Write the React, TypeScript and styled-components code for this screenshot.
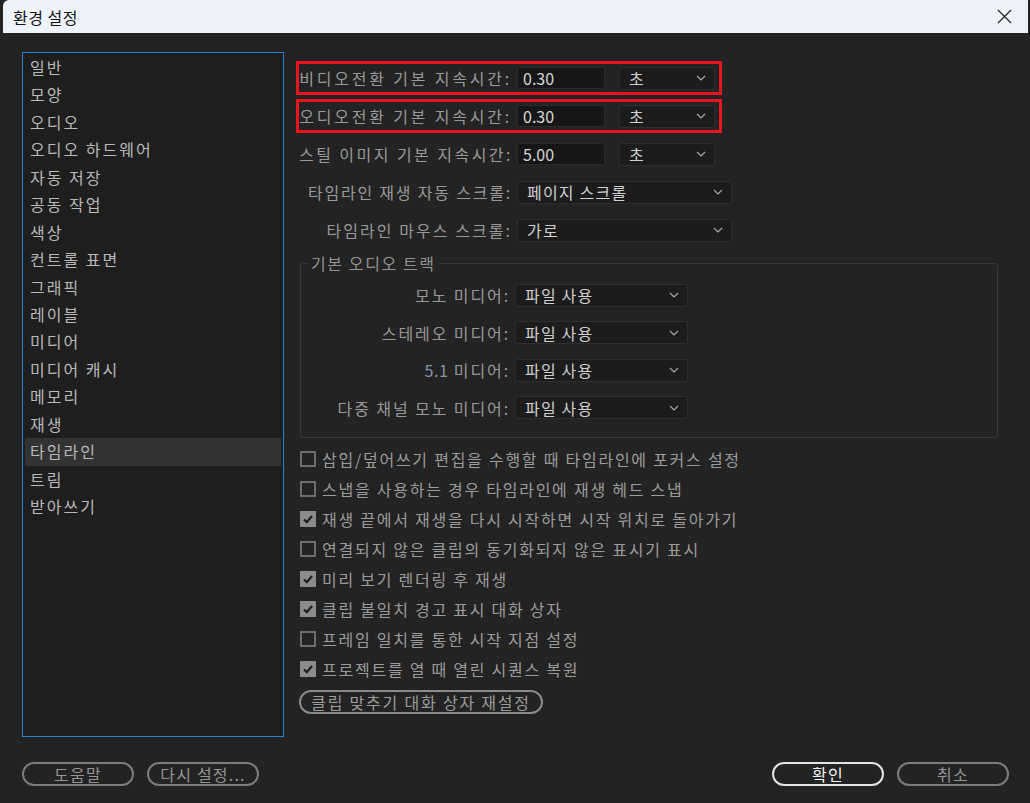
import React, { useState } from "react";
import styled, { createGlobalStyle } from "styled-components";

const GlobalStyle = createGlobalStyle`
  html, body {
    margin: 0;
    padding: 0;
    background: #232323;
  }
  body {
    font-family: "Noto Sans CJK KR", "Noto Sans", sans-serif;
  }
  * {
    box-sizing: border-box;
  }
`;

const Window = styled.div`
  width: 1030px;
  height: 803px;
  display: flex;
  flex-direction: column;
  background: #232323;
  overflow: hidden;
`;

const TitleBar = styled.div`
  height: 33px;
  margin: 0 2px 0 3px;
  border-top-left-radius: 6px;
  background: #eef2f9;
  display: flex;
  align-items: center;
  justify-content: space-between;
  padding-left: 10px;
  padding-right: 14px;
  color: #111;
  font-size: 16px;
  letter-spacing: 0.5px;
`;

const CloseButton = styled.button`
  width: 20px;
  height: 20px;
  padding: 0;
  border: none;
  background: transparent;
  display: flex;
  align-items: center;
  justify-content: center;
  cursor: pointer;
`;

const Content = styled.div`
  flex: 1;
  display: flex;
  flex-direction: column;
  padding: 19px 21px 0 22px;
`;

const Main = styled.div`
  display: flex;
  height: 685px;
`;

const Sidebar = styled.ul`
  width: 262px;
  height: 100%;
  margin: 0;
  padding: 1px 2px;
  list-style: none;
  background: #1e1e1e;
  border: 1px solid #2f7fd6;
`;

const SideItem = styled.li<{ $active?: boolean }>`
  height: 27.45px;
  line-height: 27.45px;
  padding-left: 5px;
  font-size: 16px;
  letter-spacing: 2px;
  color: #b9b9b9;
  background: ${(p) => (p.$active ? "#333333" : "transparent")};
  cursor: default;
`;

const Panel = styled.div`
  flex: 1;
  margin-left: 12px;
  padding-top: 9px;
  display: flex;
  flex-direction: column;
`;

const TopRows = styled.div`
  display: flex;
  flex-direction: column;
  gap: 4px;
`;

const Row = styled.div<{ $highlight?: boolean }>`
  display: flex;
  align-items: center;
  height: 34px;
  width: ${(p) => (p.$highlight ? "426px" : "auto")};
  border: 3px solid ${(p) => (p.$highlight ? "#e8141e" : "transparent")};
`;

const Label = styled.span<{ $width: number; $tracking?: number }>`
  width: ${(p) => p.$width}px;
  flex-shrink: 0;
  text-align: right;
  white-space: nowrap;
  font-size: 16px;
  letter-spacing: ${(p) => p.$tracking ?? 1.9}px;
  color: #999999;
  margin-right: 5px;
`;

const Num = styled.span`
  color: #8496ab;
  letter-spacing: 0.5px;
`;

const NumberInput = styled.input`
  width: 88px;
  height: 22px;
  padding: 0 5px;
  background: #161616;
  border: 1px solid #2b2b2b;
  border-radius: 2px;
  color: #d6d6d6;
  font-family: "Noto Sans CJK KR", "Noto Sans", sans-serif;
  font-size: 16px;
  outline: none;
`;

const Select = styled.div<{ $width: number; $gap?: number }>`
  width: ${(p) => p.$width}px;
  height: 23px;
  margin-left: ${(p) => p.$gap ?? 0}px;
  padding: 0 8px 0 9px;
  display: flex;
  align-items: center;
  justify-content: space-between;
  background: #1c1c1c;
  border: 1px solid #2e2e2e;
  border-radius: 2px;
  color: #d0d0d0;
  font-size: 16px;
  letter-spacing: 1.2px;
`;

const Group = styled.fieldset`
  margin: 6px 0 0 4px;
  width: 698px;
  padding: 7px 0 14px 0;
  border: 1px solid #383838;
  border-radius: 3px;
  display: flex;
  flex-direction: column;
  gap: 7.5px;
`;

const Legend = styled.legend`
  margin-left: 7px;
  padding: 0 3px;
  line-height: 20px;
  font-size: 16px;
  letter-spacing: 1.6px;
  color: #939393;
`;

const GroupRow = styled.div`
  display: flex;
  align-items: center;
  height: 30px;
`;

const CheckList = styled.div`
  margin-top: 7px;
  display: flex;
  flex-direction: column;
`;

const CheckRow = styled.label`
  display: flex;
  align-items: center;
  height: 29.9px;
  padding-left: 4px;
  font-size: 16px;
  letter-spacing: 1.75px;
  color: #9c9c9c;
  white-space: nowrap;
  cursor: default;
`;

const Box = styled.span<{ $checked: boolean }>`
  width: 16px;
  height: 16px;
  flex-shrink: 0;
  margin-right: 6px;
  border: 2px solid ${(p) => (p.$checked ? "#8c8c8c" : "#6c6c6c")};
  border-radius: 1px;
  background: ${(p) => (p.$checked ? "#8c8c8c" : "transparent")};
  display: flex;
  align-items: center;
  justify-content: center;
`;

const PillButton = styled.button<{ $primary?: boolean; $width?: number }>`
  width: ${(p) => p.$width ?? 112}px;
  height: 24px;
  padding: 0;
  border-radius: 12px;
  border: 2px solid ${(p) => (p.$primary ? "#e4e4e4" : "#7c7c7c")};
  background: transparent;
  color: ${(p) => (p.$primary ? "#f2f2f2" : "#959595")};
  font-family: "Noto Sans CJK KR", "Noto Sans", sans-serif;
  font-size: 16px;
  letter-spacing: 1.2px;
  line-height: 20px;
  white-space: nowrap;
  cursor: pointer;
`;

const ResetButton = styled(PillButton)`
  margin: 6px 0 0 3px;
  color: #9c9c9c;
  border-color: #8a8a8a;
  letter-spacing: 1.8px;
`;

const Footer = styled.div`
  margin-top: 25px;
  display: flex;
  justify-content: space-between;
`;

const ButtonGroup = styled.div`
  display: flex;
  gap: 13px;
`;

const Chevron = () => (
  <svg width="10" height="6" viewBox="0 0 10 6">
    <polyline
      points="1,1 5,5 9,1"
      fill="none"
      stroke="#a8a8a8"
      strokeWidth="1.2"
    />
  </svg>
);

const CheckMark = () => (
  <svg width="12" height="12" viewBox="0 0 12 12">
    <polyline
      points="2,6.5 4.8,9.2 10,3"
      fill="none"
      stroke="#1c1c1c"
      strokeWidth="2.2"
    />
  </svg>
);

const sideItems = [
  "일반",
  "모양",
  "오디오",
  "오디오 하드웨어",
  "자동 저장",
  "공동 작업",
  "색상",
  "컨트롤 표면",
  "그래픽",
  "레이블",
  "미디어",
  "미디어 캐시",
  "메모리",
  "재생",
  "타임라인",
  "트림",
  "받아쓰기",
];

const initialChecks = [
  { text: "삽입/덮어쓰기 편집을 수행할 때 타임라인에 포커스 설정", checked: false },
  { text: "스냅을 사용하는 경우 타임라인에 재생 헤드 스냅", checked: false },
  { text: "재생 끝에서 재생을 다시 시작하면 시작 위치로 돌아가기", checked: true },
  { text: "연결되지 않은 클립의 동기화되지 않은 표시기 표시", checked: false },
  { text: "미리 보기 렌더링 후 재생", checked: true },
  { text: "클립 불일치 경고 표시 대화 상자", checked: true },
  { text: "프레임 일치를 통한 시작 지점 설정", checked: false },
  { text: "프로젝트를 열 때 열린 시퀀스 복원", checked: true },
];

const audioTracks: { label: React.ReactNode }[] = [
  { label: "모노 미디어:" },
  { label: "스테레오 미디어:" },
  {
    label: (
      <>
        <Num>5.1</Num> 미디어:
      </>
    ),
  },
  { label: "다중 채널 모노 미디어:" },
];

const App = () => {
  const [active, setActive] = useState("타임라인");
  const [checks, setChecks] = useState(initialChecks);

  const toggle = (index: number) =>
    setChecks((prev) =>
      prev.map((c, i) => (i === index ? { ...c, checked: !c.checked } : c))
    );

  return (
    <>
      <GlobalStyle />
      <Window>
        <TitleBar>
          <span>환경 설정</span>
          <CloseButton aria-label="닫기">
            <svg width="15" height="15" viewBox="0 0 15 15">
              <path d="M1 1 L14 14 M14 1 L1 14" stroke="#222" strokeWidth="1.2" />
            </svg>
          </CloseButton>
        </TitleBar>
        <Content>
          <Main>
            <Sidebar>
              {sideItems.map((item) => (
                <SideItem
                  key={item}
                  $active={item === active}
                  onClick={() => setActive(item)}
                >
                  {item}
                </SideItem>
              ))}
            </Sidebar>
            <Panel>
              <TopRows>
                <Row $highlight>
                  <Label $width={213} $tracking={2.8}>
                    비디오전환 기본 지속시간:
                  </Label>
                  <NumberInput defaultValue="0.30" />
                  <Select $width={96} $gap={14}>
                    초<Chevron />
                  </Select>
                </Row>
                <Row $highlight>
                  <Label $width={213} $tracking={2.8}>
                    오디오전환 기본 지속시간:
                  </Label>
                  <NumberInput defaultValue="0.30" />
                  <Select $width={96} $gap={14}>
                    초<Chevron />
                  </Select>
                </Row>
                <Row>
                  <Label $width={213} $tracking={2.45}>
                    스틸 이미지 기본 지속시간:
                  </Label>
                  <NumberInput defaultValue="5.00" />
                  <Select $width={96} $gap={14}>
                    초<Chevron />
                  </Select>
                </Row>
                <Row>
                  <Label $width={213} $tracking={1.8}>
                    타임라인 재생 자동 스크롤:
                  </Label>
                  <Select $width={215}>
                    페이지 스크롤
                    <Chevron />
                  </Select>
                </Row>
                <Row>
                  <Label $width={213} $tracking={2.05}>
                    타임라인 마우스 스크롤:
                  </Label>
                  <Select $width={215}>
                    가로
                    <Chevron />
                  </Select>
                </Row>
              </TopRows>

              <Group>
                <Legend>기본 오디오 트랙</Legend>
                {audioTracks.map((track, i) => (
                  <GroupRow key={i}>
                    <Label $width={209}>{track.label}</Label>
                    <Select $width={173}>
                      파일 사용
                      <Chevron />
                    </Select>
                  </GroupRow>
                ))}
              </Group>

              <CheckList>
                {checks.map((c, i) => (
                  <CheckRow key={c.text} onClick={() => toggle(i)}>
                    <Box $checked={c.checked}>{c.checked && <CheckMark />}</Box>
                    {c.text}
                  </CheckRow>
                ))}
              </CheckList>

              <ResetButton $width={244}>클립 맞추기 대화 상자 재설정</ResetButton>
            </Panel>
          </Main>
          <Footer>
            <ButtonGroup>
              <PillButton>도움말</PillButton>
              <PillButton>다시 설정...</PillButton>
            </ButtonGroup>
            <ButtonGroup>
              <PillButton $primary>확인</PillButton>
              <PillButton>취소</PillButton>
            </ButtonGroup>
          </Footer>
        </Content>
      </Window>
    </>
  );
};

export default App;
